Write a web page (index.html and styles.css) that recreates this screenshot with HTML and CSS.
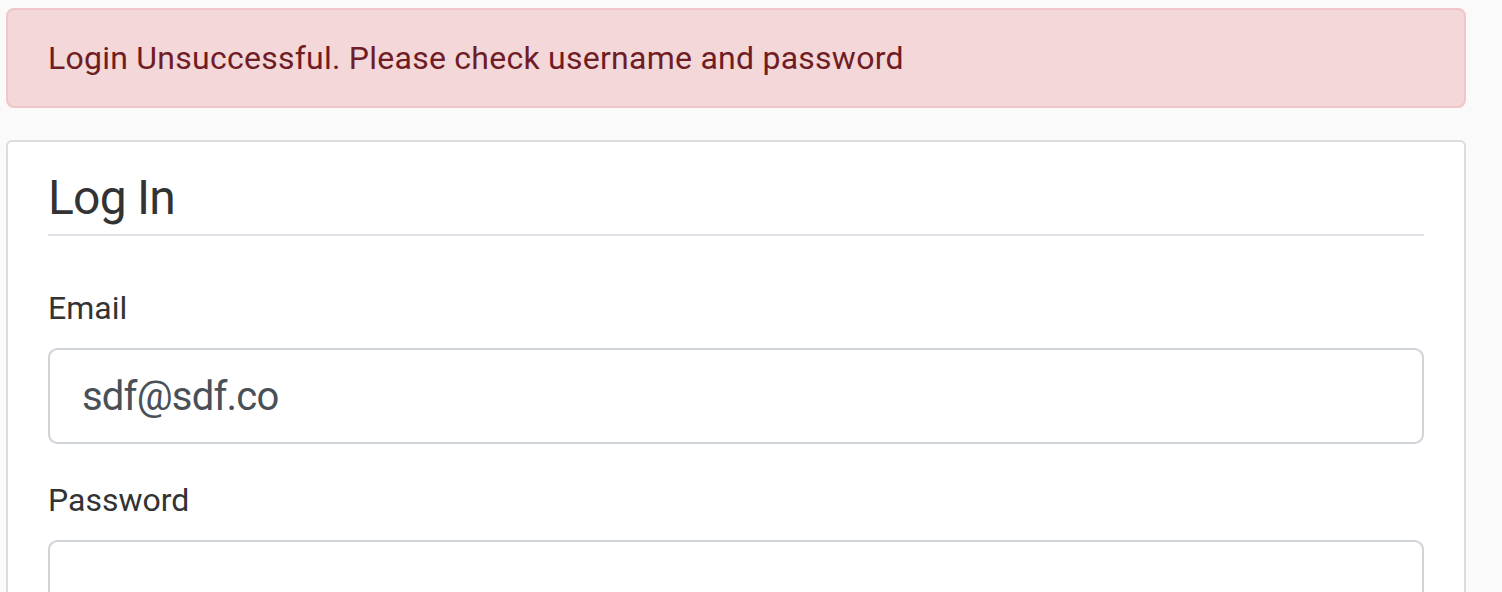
FILE: index.html
```html
<!DOCTYPE html>
<html lang="en">
<head>
<meta charset="utf-8">
<title>Log In</title>
<link rel="stylesheet" href="styles.css">
</head>
<body>
<main class="page">
  <div class="alert">Login Unsuccessful. Please check username and password</div>
  <div class="content-section">
    <form class="login-form">
      <fieldset class="fieldset">
        <legend class="legend">Log In</legend>
        <div class="form-group">
          <label class="label" for="email">Email</label>
          <input class="form-control" id="email" type="text" value="sdf@sdf.co">
        </div>
        <div class="form-group">
          <label class="label" for="password">Password</label>
          <input class="form-control" id="password" type="password" value="">
        </div>
      </fieldset>
    </form>
  </div>
</main>
</body>
</html>
```

FILE: styles.css
```css
* { box-sizing: border-box; }
html, body { margin: 0; padding: 0; }
body {
  background: #fafafa;
  font-family: Roboto, "Liberation Sans", sans-serif;
  font-size: 32px;
  line-height: 1.5;
  color: #333333;
}
.page {
  padding: 8px 36px 0 6px;
}
.alert {
  background: #f3d7d9;
  border: 2px solid #f0c6cb;
  color: #701c24;
  border-radius: 8px;
  padding: 24px 40px;
  margin-bottom: 32px;
  line-height: 48px;
  letter-spacing: 0.25px;
}
.content-section {
  background: #fff;
  border: 2px solid #dddddd;
  border-radius: 6px;
  padding: 20px 40px;
}
.login-form { margin: 0; }
.fieldset {
  border: 0;
  margin: 0;
  padding: 0;
  min-width: 0;
}
.legend {
  display: block;
  width: 100%;
  padding: 0;
  font-size: 48px;
  line-height: 72px;
  letter-spacing: -0.8px;
  border-bottom: 2px solid #dee2e6;
  margin-bottom: 48px;
  color: #333333;
}
.form-group { margin-bottom: 32px; }
.label {
  display: block;
  margin-bottom: 16px;
  line-height: 48px;
}
.form-control {
  display: block;
  width: 100%;
  height: 96px;
  padding: 16px 32px;
  font-family: inherit;
  font-size: 40px;
  line-height: 60px;
  letter-spacing: -0.8px;
  color: #495057;
  background: #fff;
  border: 2px solid #ced4da;
  border-radius: 9.6px;
  outline: none;
}
```
